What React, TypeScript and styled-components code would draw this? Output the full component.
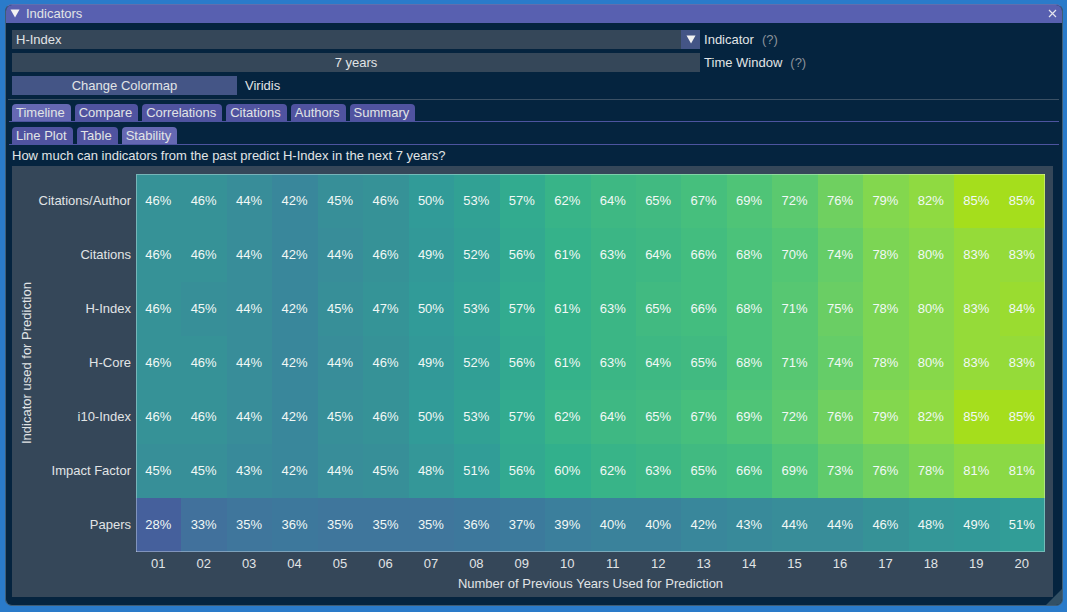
import React, { useState } from "react";
import styled, { createGlobalStyle, css } from "styled-components";

const GlobalStyle = createGlobalStyle`
  *, *::before, *::after { box-sizing: border-box; }
  body {
    margin: 0;
    background: #2a7bca;
    color: #e1e4e6;
    font: 13px/15px "Liberation Sans", Arial, sans-serif;
  }
  button, input, select { font: inherit; color: inherit; border: 0; margin: 0; }
`;

const Page = styled.main`
  display: flex;
  min-height: 100vh;
  padding: 4px 4px 6px 5px;
`;

const Window = styled.section`
  position: relative;
  flex: 1;
  min-width: 0;
  display: flex;
  flex-direction: column;
  overflow: hidden;
  border: 1px solid #3f5d75;
  border-top-color: #5f6fae;
  border-radius: 7px;
  background: #05243f;
`;

const TitleBar = styled.header`
  display: flex;
  align-items: center;
  gap: 6px;
  height: 18px;
  padding: 0 5px 2px 4px;
  background: #5860b0;
`;

const Title = styled.h1`
  flex: 1;
  margin: 0;
  font-size: 13px;
  line-height: 15px;
  font-weight: normal;
`;

const IconButton = styled.button`
  display: flex;
  padding: 0;
  background: none;
`;

const Body = styled.div`
  flex: 1;
  display: flex;
  flex-direction: column;
  padding: 7px 9px 8px 6px;
`;

const Controls = styled.div`
  display: flex;
  flex-direction: column;
  gap: 4px;
`;

const ControlRow = styled.div`
  display: flex;
  align-items: center;
  height: 19px;
`;

const fieldSize = css`
  width: calc(66% + 1px);
  height: 19px;
  margin-right: 4px;
`;

const Combo = styled.div`
  ${fieldSize}
  display: flex;
  position: relative;
  background: #354759;
`;

const Select = styled.select`
  flex: 1;
  padding: 0 4px;
  appearance: none;
  background: none;
  outline: none;
`;

const ComboArrow = styled.span`
  position: absolute;
  top: 0;
  right: 0;
  display: flex;
  align-items: center;
  justify-content: center;
  width: 19px;
  height: 19px;
  background: #445586;
  pointer-events: none;
`;

const DragField = styled.input`
  ${fieldSize}
  padding: 0;
  text-align: center;
  background: #354759;
  outline: none;
`;

const Help = styled.span`
  margin-left: 8px;
  color: #8b929a;
`;

const ColormapButton = styled.button`
  width: 225px;
  height: 19px;
  margin-right: 8px;
  padding: 0;
  background: #445586;
`;

const Separator = styled.hr`
  height: 1px;
  margin: 4px -6px 4px -4px;
  border: 0;
  background: #3b5064;
`;

const TabBar = styled.div`
  display: flex;
  gap: 4px;
  height: 18px;
  margin: 0 -6px 5px -3px;
  padding-left: 3px;
  border-bottom: 1px solid #4d54a0;
`;

const Tab = styled.button<{ $active: boolean }>`
  height: 17px;
  padding: 1px 6px 1px 4px;
  border-radius: 4px 4px 0 0;
  background: ${(p) => (p.$active ? "#6568b3" : "#5053a0")};
`;

const Question = styled.p`
  margin: -2px 0 3px;
`;

const Plot = styled.figure`
  display: flex;
  flex: 1;
  margin: 0;
  padding: 8px 8px 5px;
  background: #354759;
`;

const YAxis = styled.div`
  width: 15px;
  height: 378px;
  margin-left: -1px;
  margin-right: 1px;
  text-align: center;
  writing-mode: vertical-rl;
  transform: rotate(180deg);
`;

const PlotArea = styled.div`
  flex: 1;
  min-width: 0;
`;

const HeatTable = styled.table`
  display: block;
  border-spacing: 0;

  tbody, tfoot { display: block; }
`;

const Row = styled.tr<{ $height: number }>`
  display: grid;
  grid-template-columns: 101px repeat(20, 1fr);
  height: ${(p) => p.$height}px;

  th, td {
    display: flex;
    align-items: center;
    justify-content: center;
    padding: 0 1px 1px 0;
    font-weight: normal;
  }
  th[scope="row"] {
    justify-content: flex-end;
    padding-right: 5px;
  }
`;

const edge = "rgba(255, 255, 255, 0.32)";

const Cell = styled.td<{ $color: string; $left: boolean; $right: boolean; $top: boolean; $bottom: boolean }>`
  background: ${(p) => p.$color};
  color: #f1f8f6;
  box-shadow:
    inset ${(p) => (p.$left ? 1 : 0)}px ${(p) => (p.$top ? 1 : 0)}px ${edge},
    inset ${(p) => (p.$right ? -1 : 0)}px ${(p) => (p.$bottom ? -1 : 0)}px ${edge};
`;

const XAxis = styled.figcaption`
  margin-left: 101px;
  text-align: center;
`;

const Grip = styled.svg`
  position: absolute;
  right: 0;
  bottom: 0;
`;

const Triangle = () => (
  <svg width="10" height="9" viewBox="0 0 10 9" aria-hidden="true">
    <path d="M0.5 0.5h9L5 8.5z" fill="#f2f2f2" />
  </svg>
);

const stops: [number, number[]][] = [
  [28, [69, 96, 156]],
  [33, [65, 113, 156]],
  [37, [60, 122, 156]],
  [42, [57, 135, 155]],
  [46, [54, 146, 151]],
  [50, [49, 155, 152]],
  [53, [49, 161, 148]],
  [57, [50, 171, 143]],
  [60, [50, 176, 140]],
  [64, [62, 184, 131]],
  [67, [70, 191, 125]],
  [69, [79, 196, 119]],
  [72, [91, 201, 111]],
  [76, [111, 208, 96]],
  [79, [131, 215, 78]],
  [82, [143, 218, 65]],
  [84, [154, 220, 48]],
  [85, [165, 222, 28]],
];

function viridis(value: number): string {
  const i = Math.max(1, stops.findIndex(([v]) => v >= value));
  const [a, from] = stops[i - 1];
  const [b, to] = stops[i];
  const t = (value - a) / (b - a);
  return `rgb(${from.map((c, k) => Math.round(c + (to[k] - c) * t)).join(", ")})`;
}

const data: [string, number[]][] = [
  ["Citations/Author", [46, 46, 44, 42, 45, 46, 50, 53, 57, 62, 64, 65, 67, 69, 72, 76, 79, 82, 85, 85]],
  ["Citations", [46, 46, 44, 42, 44, 46, 49, 52, 56, 61, 63, 64, 66, 68, 70, 74, 78, 80, 83, 83]],
  ["H-Index", [46, 45, 44, 42, 45, 47, 50, 53, 57, 61, 63, 65, 66, 68, 71, 75, 78, 80, 83, 84]],
  ["H-Core", [46, 46, 44, 42, 44, 46, 49, 52, 56, 61, 63, 64, 65, 68, 71, 74, 78, 80, 83, 83]],
  ["i10-Index", [46, 46, 44, 42, 45, 46, 50, 53, 57, 62, 64, 65, 67, 69, 72, 76, 79, 82, 85, 85]],
  ["Impact Factor", [45, 45, 43, 42, 44, 45, 48, 51, 56, 60, 62, 63, 65, 66, 69, 73, 76, 78, 81, 81]],
  ["Papers", [28, 33, 35, 36, 35, 35, 35, 36, 37, 39, 40, 40, 42, 43, 44, 44, 46, 48, 49, 51]],
];

const years = Array.from({ length: 20 }, (_, i) => String(i + 1).padStart(2, "0"));

function Tabs({ names, initial, label }: { names: string[]; initial: string; label: string }) {
  const [active, setActive] = useState(initial);
  return (
    <TabBar role="tablist" aria-label={label}>
      {names.map((name) => (
        <Tab
          key={name}
          type="button"
          role="tab"
          aria-selected={name === active}
          $active={name === active}
          onClick={() => setActive(name)}
        >
          {name}
        </Tab>
      ))}
    </TabBar>
  );
}

export default function App() {
  return (
    <Page>
      <GlobalStyle />
      <Window>
        <TitleBar>
          <IconButton type="button" aria-label="Collapse">
            <Triangle />
          </IconButton>
          <Title>Indicators</Title>
          <IconButton type="button" aria-label="Close">
            <svg width="9" height="9" viewBox="0 0 9 9" aria-hidden="true">
              <path d="M1 1l7 7M8 1L1 8" stroke="#e4e4ee" strokeWidth="1.2" />
            </svg>
          </IconButton>
        </TitleBar>
        <Body>
          <Controls>
            <ControlRow>
              <Combo>
                <Select id="indicator" defaultValue="H-Index">
                  {data.map(([name]) => (
                    <option key={name}>{name}</option>
                  ))}
                </Select>
                <ComboArrow>
                  <Triangle />
                </ComboArrow>
              </Combo>
              <label htmlFor="indicator">Indicator</label>
              <Help>(?)</Help>
            </ControlRow>
            <ControlRow>
              <DragField id="window" type="text" defaultValue="7 years" />
              <label htmlFor="window">Time Window</label>
              <Help>(?)</Help>
            </ControlRow>
            <ControlRow>
              <ColormapButton type="button">Change Colormap</ColormapButton>
              <span>Viridis</span>
            </ControlRow>
          </Controls>
          <Separator />
          <Tabs
            label="Sections"
            initial="Timeline"
            names={["Timeline", "Compare", "Correlations", "Citations", "Authors", "Summary"]}
          />
          <Tabs label="Timeline views" initial="Stability" names={["Line Plot", "Table", "Stability"]} />
          <Question>How much can indicators from the past predict H-Index in the next 7 years?</Question>
          <Plot>
            <YAxis>Indicator used for Prediction</YAxis>
            <PlotArea>
              <HeatTable>
                <tbody>
                  {data.map(([name, values], r) => (
                    <Row key={name} $height={54}>
                      <th scope="row">{name}</th>
                      {values.map((v, c) => (
                        <Cell
                          key={c}
                          $color={viridis(v)}
                          $left={c === 0}
                          $right={c === values.length - 1}
                          $top={r === 0}
                          $bottom={r === data.length - 1}
                        >
                          {v}%
                        </Cell>
                      ))}
                    </Row>
                  ))}
                </tbody>
                <tfoot>
                  <Row $height={24}>
                    <td />
                    {years.map((y) => (
                      <th key={y} scope="col">
                        {y}
                      </th>
                    ))}
                  </Row>
                </tfoot>
              </HeatTable>
              <XAxis>Number of Previous Years Used for Prediction</XAxis>
            </PlotArea>
          </Plot>
        </Body>
        <Grip width="16" height="16" viewBox="0 0 16 16" aria-hidden="true">
          <path d="M16 0v16H0z" fill="#335064" />
        </Grip>
      </Window>
    </Page>
  );
}
